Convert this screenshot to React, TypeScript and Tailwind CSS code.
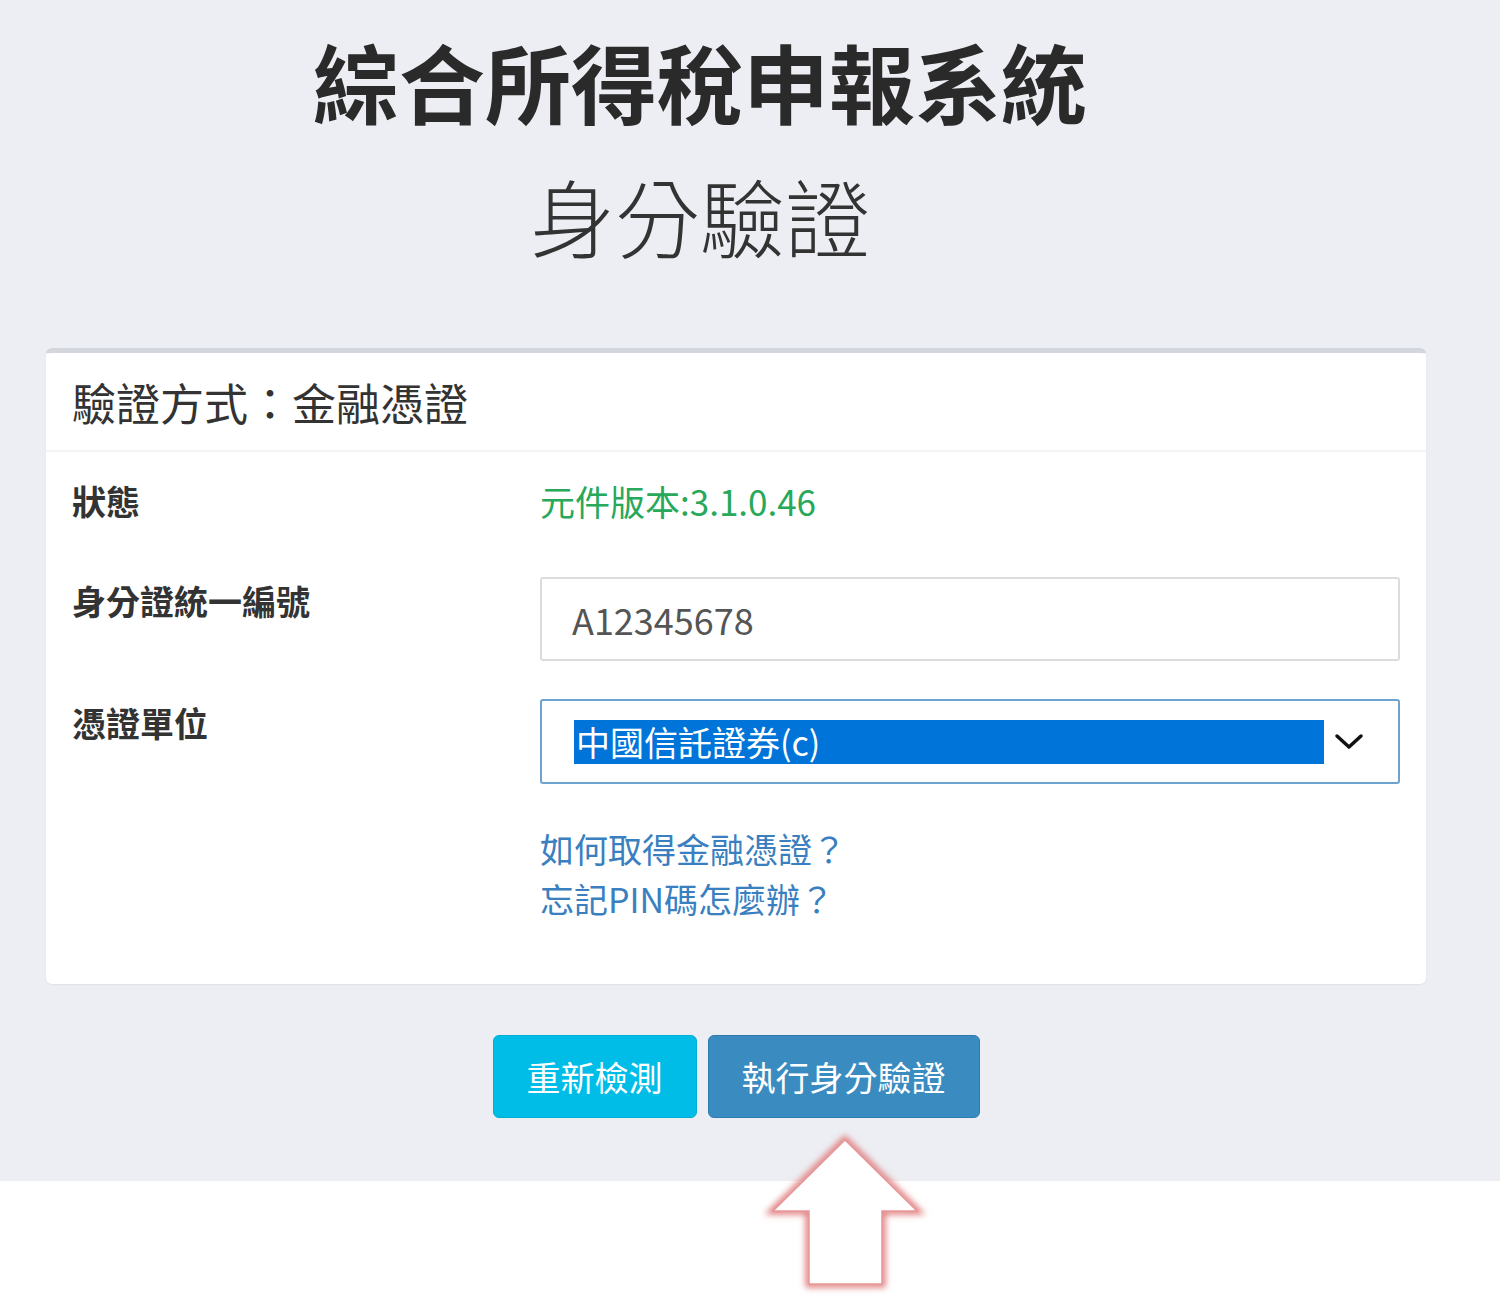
import React from "react";

const cjk = { fontFamily: '"Noto Sans CJK TC", "Noto Sans", sans-serif' };

function Chevron() {
  return (
    <svg width="30" height="20" viewBox="0 0 30 20" className="shrink-0">
      <path d="M3 4 L15 15 L27 4" fill="none" stroke="#111" strokeWidth="3.5" strokeLinecap="round" strokeLinejoin="round" />
    </svg>
  );
}

function Arrow() {
  return (
    <svg
      className="absolute left-[760px] top-[1125px]"
      width="180"
      height="180"
      viewBox="760 1125 180 180"
    >
      <defs>
        <filter id="glow" x="-20%" y="-20%" width="140%" height="140%">
          <feGaussianBlur stdDeviation="3" />
        </filter>
      </defs>
      <polygon
        points="845,1140 917,1211 882,1211 882,1284 809,1284 809,1211 773,1211"
        fill="none"
        stroke="#e07b7b"
        strokeWidth="7"
        strokeLinejoin="miter"
        filter="url(#glow)"
      />
      <polygon
        points="845,1140 917,1211 882,1211 882,1284 809,1284 809,1211 773,1211"
        fill="#ffffff"
        stroke="#e79898"
        strokeWidth="1.5"
      />
    </svg>
  );
}

export default function App() {
  return (
    <div className="relative w-[1500px] h-[1307px] bg-white overflow-hidden" style={cjk}>
      <div className="h-[1181px] bg-[#eceef3] flex flex-col">
        <div className="w-[1400px] flex flex-col items-center">
          <h1 className="mt-[27px] text-[86px] leading-[108px] font-semibold text-[#2a2a2a] tracking-[0px]">
            綜合所得稅申報系統
          </h1>
          <h2 className="mt-[26px] text-[85px] leading-[108px] font-light text-[#333]">
            身分驗證
          </h2>
        </div>

        <div className="ml-[46px] mt-[79px] w-[1380px] bg-white rounded-[6px] border-t-[5px] border-[#d3d6dd] shadow-[0_1px_2px_rgba(0,0,0,0.06)] flex flex-col">
          <div className="h-[99px] border-b-2 border-[#f3f4f6] pl-[26px] flex items-center">
            <span className="text-[44px] leading-none text-[#333]">驗證方式：金融憑證</span>
          </div>

          <div className="px-[26px] pt-[22px] pb-[60px] flex flex-col">
            <div className="flex items-start h-[103px]">
              <div className="w-[468px] text-[34px] font-bold leading-[54px] text-[#333]">狀態</div>
              <div className="text-[35px] leading-[54px] text-[#27a85a]">元件版本:3.1.0.46</div>
            </div>

            <div className="flex items-start h-[122px]">
              <div className="w-[468px] pt-[0px] text-[34px] font-bold leading-[48px] text-[#333]">身分證統一編號</div>
              <div className="flex-1 h-[84px] border-2 border-[#dcdcdf] rounded-[3px] flex items-center pl-[30px]">
                <span className="text-[36px] text-[#555]">A12345678</span>
              </div>
            </div>

            <div className="flex items-start h-[125px]">
              <div className="w-[468px] pt-[0px] text-[34px] font-bold leading-[48px] text-[#333]">憑證單位</div>
              <div className="flex-1 h-[85px] border-2 border-[#6fa3cf] rounded-[3px] flex items-center pl-[32px] pr-[34px]">
                <div className="flex-1 h-[44px] bg-[#0074d9] flex items-center pl-[2px]">
                  <span className="text-[34px] leading-none text-white">中國信託證券(c)</span>
                </div>
                <div className="ml-[10px]">
                  <Chevron />
                </div>
              </div>
            </div>

            <div className="pl-[468px] flex flex-col">
              <span className="text-[34px] leading-[50px] text-[#3a7fc0]">如何取得金融憑證？</span>
              <span className="text-[34px] leading-[50px] text-[#3a7fc0]">忘記PIN碼怎麼辦？</span>
            </div>
          </div>
        </div>

        <div className="w-[1472px] mt-[51px] flex justify-center gap-[11px]">
          <button className="w-[204px] h-[83px] rounded-[6px] bg-[#00bde8] border border-[#00aed6] text-white text-[34px]">
            重新檢測
          </button>
          <button className="w-[272px] h-[83px] rounded-[6px] bg-[#3a8bc0] border border-[#2f7bb0] text-white text-[34px]">
            執行身分驗證
          </button>
        </div>
      </div>
      <Arrow />
    </div>
  );
}
